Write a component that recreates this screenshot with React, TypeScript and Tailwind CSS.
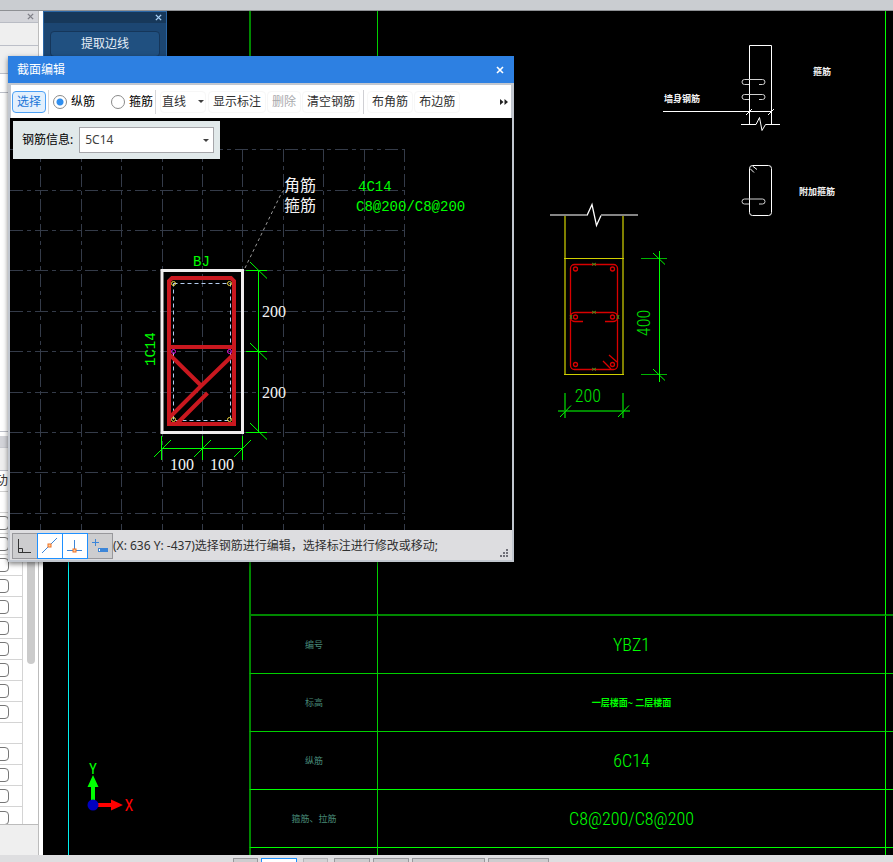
import { Fragment } from "react";

const boxRows = [true, true, true, true, true, true, true, true, true, true, false, true, true, true, true];

const gridX = [40, 81, 121, 162, 202, 242, 283, 323, 364, 404];
const gridY = [149, 190, 230, 270, 311, 351, 392, 432, 472, 513];

const rows: { label: string; value: string; cad: boolean; line: string }[] = [
  { label: "编号", value: "YBZ1", cad: true, line: "border-b-[#00d000]" },
  { label: "标高", value: "一层楼面~ 二层楼面", cad: false, line: "border-b-[#00d000]" },
  { label: "纵筋", value: "6C14", cad: true, line: "border-b-[#00ff00]" },
  { label: "箍筋、拉筋", value: "C8@200/C8@200", cad: true, line: "border-b-[#00ff00]" },
];

const cadFont = "font-['Roboto_Condensed','Liberation_Sans_Narrow','Liberation_Sans','Noto_Sans_CJK_SC',sans-serif]";

function Cross({ className }: { className: string }) {
  return (
    <svg viewBox="0 0 8 8" className={className} fill="none" stroke="currentColor" strokeWidth="1.6">
      <path d="M1 1L7 7M7 1L1 7" />
    </svg>
  );
}

function SidePanel() {
  return (
    <aside className="flex w-[39px] shrink-0 flex-col overflow-hidden border-r border-[#bcbcbc] bg-[#efefef]">
      <div className="flex h-3 items-center justify-end border-b border-[#b9bcc4] bg-[#d3d4d9] pr-1">
        <button type="button" aria-label="关闭面板" className="text-[#808088]">
          <Cross className="size-[7px]" />
        </button>
      </div>
      <div className="h-[23px] border-b border-[#bcbfc8]" />
      <div className="h-7 border-b border-[#bcbfc8]" />
      <div className="h-[19px] border-b border-[#bcbfc8] bg-white" />
      <div className="h-[339px] border-b border-[#bcbfc8] bg-white" />
      <div className="h-1 bg-white" />
      <div className="h-3 border-b border-[#c8cad0] bg-[#d3d4d9]" />
      <div className="h-[23px] border-b border-[#bcbfc8]" />
      <div className="flex h-[354px] flex-col overflow-hidden border-b border-[#bcbcbc] bg-white">
        <div className="flex h-[21px] shrink-0 items-center border-b border-[#d0d0d0]">
          <span className="-ml-1 text-xs text-[#303030]">功</span>
        </div>
        <div className="flex">
          <div className="w-[23px] border-r border-[#d4d4d4]">
            <div className="h-[21px] border-b border-[#d4d4d4]" />
            {boxRows.map((has, i) => (
              <div key={i} className="flex h-[21px] items-center overflow-hidden border-b border-[#d4d4d4] last:border-b-0">
                {has && (
                  <input
                    type="checkbox"
                    aria-label={`行 ${i + 1}`}
                    className="-ml-[5px] size-[14px] appearance-none rounded-sm border border-[#777] bg-white"
                  />
                )}
              </div>
            ))}
          </div>
          <div className="w-3 pl-1">
            <div className="h-[172px] w-2 rounded-b-full bg-[#cbcbcb]" />
          </div>
        </div>
      </div>
    </aside>
  );
}

function Hook({ y }: { y: number }) {
  return (
    <path
      d={`M749 ${y + 5}h-4.5a2.5 2.5 0 0 1 0-5h18a2.5 2.5 0 0 1 0 5h-3.5`}
      stroke="#d0d0d0"
    />
  );
}

function Detail() {
  return (
    <svg viewBox="378 11 507 603" className="block h-[603px] w-[507px]" fill="none" strokeWidth="1">
      <g stroke="#fff">
        <path d="M749.5 124V45.5H771.5V124M663 111.5H772" />
        <path d="M746 115L752 109M768 115L774 109" />
        <path d="M741 124.500H756L759.500 117.500L762 130.500L765.500 124.500H780" />
        <rect x="749.5" y="165.500" width="22" height="50" rx="3" />
        <path d="M750 168.500L754 172.500M752.500 166L757 169.500" />
        <path d="M587 215.500L592 204.500L596.500 225.500L601 215.500" strokeWidth="1.300" />
      </g>
      <Hook y={79.5} />
      <Hook y={94.5} />
      <Hook y={199} />
      <path d="M550 215H587M601 215H638" stroke="#858585" strokeWidth="2" />
      <path d="M565 216V375M623 216V375" stroke="#808000" strokeWidth="2" />
      <path d="M564 258.500H624M564 374.500H624" stroke="#d0d000" />
      <g stroke="#d80000" strokeWidth="1.300">
        <rect x="570.500" y="264.500" width="47" height="105" rx="4" />
        <path d="M583 321.500H575a4.500 4.500 0 0 1 0-9H613a4.500 4.500 0 0 1 0 9H605" />
        <path d="M603 361L611 369M609 355L617 362" />
        {[269, 317, 364.5].map((y) => (
          <Fragment key={y}>
            <circle cx="575.500" cy={y} r="2" />
            <circle cx="612.500" cy={y} r="2" />
          </Fragment>
        ))}
      </g>
      <path
        d="M592 263L596 265.500M592 265.500L596 263M592 311L596 313.500M592 313.500L596 311M592 368L596 370.500M592 370.500L596 368M570 315L572 319M572 315L570 319M617 315L619 319M619 315L617 319"
        stroke="#508a18"
      />
      <path d="M565 393V418M623 393V418M558 411H630" stroke="#008800" strokeWidth="2" />
      <path d="M641 258.500H667M641 374.500H667" stroke="#00b400" />
      <path
        d="M659.500 251V382M653 253L665 264.500M653 369L665 380.500M560 417L571 405.500M618 417L629 405.500"
        stroke="#00ff00"
      />
      <g fill="#00e000" stroke="none" className={`${cadFont} text-[18px] font-light`} textAnchor="middle">
        <text x="588" y="402">200</text>
        <text transform="translate(650 323) rotate(-90)">400</text>
      </g>
      <g fill="#f4f4f4" stroke="none" className="font-['Noto_Sans_CJK_SC',sans-serif] text-[9px] font-bold" textAnchor="middle">
        <text x="682" y="102">墙身钢筋</text>
        <text x="822" y="75">箍筋</text>
        <text x="817" y="195">附加箍筋</text>
      </g>
    </svg>
  );
}

function DrawingTable() {
  return (
    <table className="w-full table-fixed border-separate border-spacing-0">
      <colgroup>
        <col className="w-[129px]" />
        <col />
        <col className="w-[7px]" />
      </colgroup>
      <tbody>
        <tr>
          <td className="border-r border-b-2 border-l-2 border-r-[#00d000] border-b-[#008800] border-l-[#008800] p-0" />
          <td className="border-r border-b-2 border-r-[#00ff00] border-b-[#008800] p-0">
            <Detail />
          </td>
          <td className="border-b-2 border-b-[#008800] p-0" />
        </tr>
        {rows.map((r) => (
          <tr key={r.label} className="h-[58px]">
            <th
              scope="row"
              className={`border-r border-b border-l-2 border-r-[#00d000] border-l-[#008800] p-0 text-[9px] font-normal text-[#478a78] ${r.line}`}
            >
              {r.label}
            </th>
            <td
              className={`border-r border-b border-r-[#00ff00] p-0 text-center text-[#00ff00] ${r.line} ${
                r.cad ? `${cadFont} text-[18px] leading-6 font-light` : "text-[9px] font-bold"
              }`}
            >
              {r.value}
            </td>
            <td className={`border-b p-0 ${r.line}`} />
          </tr>
        ))}
        <tr className="h-[7px]">
          <td className="border-r border-l-2 border-r-[#00d000] border-l-[#008800] p-0" />
          <td className="border-r border-r-[#00ff00] p-0" />
          <td className="p-0" />
        </tr>
      </tbody>
    </table>
  );
}

function AxisMark() {
  return (
    <svg viewBox="84 756 60 64" className="absolute bottom-[35px] left-[41px] h-16 w-[60px]">
      <path d="M91 803V787H87.500L93 775L98.500 787H95V803Z" fill="#00ff00" />
      <path d="M97 803H111V799.500L123 805L111 810.500V807H97Z" fill="#ff0000" />
      <circle cx="93" cy="805" r="5.500" fill="#0000c0" />
      <text x="93" y="774" fill="#00ff00" textAnchor="middle" className={`${cadFont} text-[15px]`}>Y</text>
      <text x="129" y="811" fill="#ff0000" textAnchor="middle" className={`${cadFont} text-[16px]`}>X</text>
    </svg>
  );
}

function ExtractPanel() {
  return (
    <section className="absolute top-[11px] left-[43px] h-20 w-[124px] border border-[#2a66a5] bg-[#1c4672]">
      <div className="flex h-[11px] items-center justify-end bg-[#17385a] pr-1">
        <button type="button" aria-label="关闭" className="text-[#a9d0f4]">
          <Cross className="size-[7px]" />
        </button>
      </div>
      <div className="px-1.5 pt-[7px]">
        <button
          type="button"
          className="h-[26px] w-full rounded-sm border border-[#15365a] bg-[#205080] text-xs text-[#e6eef6]"
        >
          提取边线
        </button>
      </div>
    </section>
  );
}

function ToolButton({ children, disabled }: { children: string; disabled?: boolean }) {
  return (
    <button
      type="button"
      disabled={disabled}
      className="h-[22px] shrink-0 rounded-sm border border-[#f7f7f7] px-1 whitespace-nowrap disabled:text-[#a9a9ad]"
    >
      {children}
    </button>
  );
}

function ToolRadio({ label, checked, className }: { label: string; checked?: boolean; className: string }) {
  return (
    <label className={`flex shrink-0 items-center gap-1 text-black ${className}`}>
      <input
        type="radio"
        name="bar"
        defaultChecked={checked}
        className="size-[14px] appearance-none rounded-full border border-[#8a8a8a] bg-white checked:bg-[radial-gradient(circle,#2f8eef_3px,#fff_4px)]"
      />
      {label}
    </label>
  );
}

function Toolbar() {
  return (
    <div className="mx-px flex h-[33px] items-center bg-white pl-px text-xs text-[#303030]">
      <button
        type="button"
        className="h-[22px] shrink-0 rounded-sm border border-[#4da1f5] bg-[#e3f0fd] px-1 text-[#1a76d8]"
      >
        选择
      </button>
      <span className="ml-0.5 h-6 w-px bg-[#d8d8da]" />
      <ToolRadio label="纵筋" checked className="ml-1" />
      <ToolRadio label="箍筋" className="ml-4" />
      <span className="ml-0.5 h-6 w-px bg-[#d8d8da]" />
      <button
        type="button"
        className="ml-1 flex h-[22px] shrink-0 items-center gap-3 rounded-sm border border-[#f7f7f7] px-px"
      >
        直线
        <svg viewBox="0 0 6 3" className="h-[3px] w-[6px]" fill="#404040">
          <path d="M0 0H6L3 3Z" />
        </svg>
      </button>
      <div className="ml-0.5 flex gap-px">
        <ToolButton>显示标注</ToolButton>
        <ToolButton disabled>删除</ToolButton>
        <ToolButton>清空钢筋</ToolButton>
      </div>
      <span className="mx-[3px] h-6 w-px bg-[#d0d0d4]" />
      <div className="flex gap-px">
        <ToolButton>布角筋</ToolButton>
        <ToolButton>布边筋</ToolButton>
      </div>
      <button type="button" aria-label="更多" className="mr-[3px] ml-auto">
        <svg viewBox="0 0 8 6" className="h-[6px] w-2" fill="#222">
          <path d="M0 0L3.500 3L0 6ZM4.500 0L8 3L4.500 6Z" />
        </svg>
      </button>
    </div>
  );
}

function SectionView() {
  return (
    <svg viewBox="10 118 502 412" className="block h-[412px] w-full" preserveAspectRatio="xMinYMin" fill="none">
      <g stroke="#343b49" strokeDasharray="13 4 4 4" strokeWidth="1">
        {gridX.map((x) => (
          <path key={x} d={`M${x + 0.5} 149V530`} />
        ))}
        {gridY.map((y) => (
          <path key={y} d={`M10 ${y + 0.5}H405`} />
        ))}
      </g>
      <path d="M245 268L281 194L284 190" stroke="#9a9a9a" strokeDasharray="3 3" />
      <rect x="162" y="270.500" width="80.500" height="162" stroke="#f0eeee" strokeWidth="3" />
      <rect x="173.500" y="283.500" width="57" height="137" stroke="#b4cdf0" strokeDasharray="4 3" />
      <g stroke="#c9181f" strokeWidth="4">
        <path d="M169 424V281L172 278H231L234 281V424Z" />
        <path d="M169 347H234M169 354L201.500 386M234 354L200 387L169 418M207.500 393L177 423.500" />
      </g>
      <g stroke="#e8d040">
        <circle cx="173.500" cy="283.500" r="2" />
        <circle cx="229.500" cy="283.500" r="2" />
        <circle cx="173.500" cy="419.500" r="2" />
        <circle cx="229.500" cy="419.500" r="2" />
      </g>
      <g stroke="#e010e0">
        <circle cx="173.500" cy="351.500" r="2" />
        <circle cx="229.500" cy="351.500" r="2" />
      </g>
      <g stroke="#00ff00">
        <path d="M258.500 270V433M246 270.500H267M246 351.500H267M246 432.500H267" />
        <path d="M250 262L267 278.500M250 343L267 359.500M250 423L267 439.500" />
        <path d="M161 448.500H243M161.500 436V460M202.500 436V460M242.500 436V460" />
        <path d="M154 457L171 440M194 457L211 440M234 457L251 440" />
      </g>
      <g fill="#f4f4f4" className="font-['Liberation_Serif',serif] text-[16px]">
        <text x="262" y="317">200</text>
        <text x="262" y="398">200</text>
        <text x="170" y="470">100</text>
        <text x="210" y="470">100</text>
      </g>
      <g fill="#f4f4f4" className="font-['Noto_Sans_CJK_SC',sans-serif] text-[16px]">
        <text x="284" y="191">角筋</text>
        <text x="284" y="211">箍筋</text>
      </g>
      <g fill="#00ff00" className="font-['Liberation_Mono',monospace] text-[14px]">
        <text x="358" y="191">4C14</text>
        <text x="356" y="211">C8@200/C8@200</text>
        <text x="193" y="266">BJ</text>
        <text transform="translate(155 366) rotate(-90)">1C14</text>
      </g>
    </svg>
  );
}

function StatusBar() {
  const idle = "size-[26px] border border-[#98989c] bg-[#cdcdcf]";
  const active = "size-[26px] border border-[#1e90ff] bg-white";
  return (
    <div className="flex h-[30px] items-center bg-[#dddde0] pt-0.5 pl-0.5 text-xs text-[#303030]">
      <div className="flex -space-x-px">
        <button type="button" aria-label="正交" className={idle}>
          <svg viewBox="0 0 24 24" fill="none" stroke="#333">
            <path d="M5.500 5V18.500H18M5.500 14.500H9.500V18.500" />
          </svg>
        </button>
        <button type="button" aria-label="中点" className={active}>
          <svg viewBox="0 0 24 24" fill="none" stroke="#3d86d8">
            <path d="M4 19L19 4" />
            <rect x="10" y="10" width="3" height="3" stroke="#f07020" fill="#ffd0a0" />
          </svg>
        </button>
        <button type="button" aria-label="垂点" className={`relative ${active}`}>
          <svg viewBox="0 0 24 24" fill="none" stroke="#3d86d8">
            <path d="M11.500 6V16M4 16.500H19" />
            <rect x="10" y="15" width="3" height="3" stroke="#f07020" fill="#ffd0a0" />
          </svg>
        </button>
        <button type="button" aria-label="动态输入" className={idle}>
          <svg viewBox="0 0 24 24" fill="none" stroke="#3d86d8">
            <path d="M7.500 5V12M4 8.500H11" />
            <rect x="10" y="14" width="10" height="4" fill="#3d86d8" stroke="none" />
            <path d="M11.500 15V17" stroke="#fff" />
          </svg>
        </button>
      </div>
      <span className="whitespace-nowrap">(X: 636 Y: -437)选择钢筋进行编辑，选择标注进行修改或移动;</span>
      <svg viewBox="0 0 9 9" className="mr-[3px] mb-0.5 ml-auto size-[9px] self-end" fill="#707078">
        <path d="M6 0h2v2h-2zM3 3h2v2h-2zM6 3h2v2h-2zM0 6h2v2h-2zM3 6h2v2h-2zM6 6h2v2h-2z" />
      </svg>
    </div>
  );
}

function SectionDialog() {
  return (
    <section
      role="dialog"
      aria-label="截面编辑"
      className="absolute top-14 left-2 w-[506px] bg-[#c2c7cf] shadow-[0_2px_5px_rgba(0,0,0,0.5)]"
    >
      <header className="flex h-[27px] items-center justify-between bg-[#2d80e2] pr-2.5 pl-[9px] text-white">
        <h1 className="text-xs">截面编辑</h1>
        <button type="button" aria-label="关闭对话框">
          <Cross className="size-2" />
        </button>
      </header>
      <div className="px-0.5 pt-0.5 pb-0.5">
        <Toolbar />
        <div className="relative bg-black">
          <SectionView />
          <div className="absolute top-[3px] left-[3px] flex h-[38px] w-[207px] items-center gap-1.5 bg-[#e1e9ea] pr-1.5 pl-[9px] text-xs text-black">
            <label htmlFor="bar-info" className="shrink-0">钢筋信息:</label>
            <div className="relative flex-1">
              <select
                id="bar-info"
                defaultValue="5C14"
                className="block h-[26px] w-full appearance-none border border-[#a6a6aa] bg-white pl-[5px] text-xs text-[#404040]"
              >
                <option>5C14</option>
                <option>4C14</option>
              </select>
              <svg viewBox="0 0 6 3" className="pointer-events-none absolute top-3 right-[5px] h-[3px] w-[6px]" fill="#404040">
                <path d="M0 0H6L3 3Z" />
              </svg>
            </div>
          </div>
        </div>
        <StatusBar />
      </div>
    </section>
  );
}

function BottomBar() {
  const idle = "h-4 shrink-0 border border-[#98989c] bg-[#cdcdcf]";
  return (
    <footer className="flex h-[7px] shrink-0 items-start gap-[3px] overflow-hidden bg-[#dedee0] pt-[3px] pl-[233px]">
      <button type="button" aria-label="捕捉" className={`w-[25px] ${idle}`} />
      <button type="button" aria-label="视图" className="h-4 w-9 shrink-0 border border-[#1e90ff] bg-white" />
      <button type="button" aria-label="撤销" disabled className={`mx-[3px] w-[25px] opacity-60 ${idle}`} />
      <button type="button" aria-label="图层" className={`w-9 ${idle}`} />
      <button type="button" aria-label="构件" className={`w-9 ${idle}`} />
      <button type="button" aria-label="跨图层选择" className={`w-[73px] ${idle}`} />
      <button type="button" aria-label="折线选择" className={`w-[61px] ${idle}`} />
    </footer>
  );
}

export default function App() {
  return (
    <div className="relative flex min-h-screen flex-col overflow-hidden bg-white font-['Noto_Sans','Noto_Sans_CJK_SC',sans-serif]">
      <div className="h-[11px] shrink-0 border-b border-[#8e9094] bg-[#cacdd1]" />
      <div className="flex flex-1">
        <SidePanel />
        <main className="relative ml-1 flex-1 bg-black pl-[25px]">
          <div className="h-full border-l border-[#00f0f0] pl-[180px]">
            <DrawingTable />
          </div>
          <AxisMark />
        </main>
      </div>
      <BottomBar />
      <ExtractPanel />
      <SectionDialog />
    </div>
  );
}
